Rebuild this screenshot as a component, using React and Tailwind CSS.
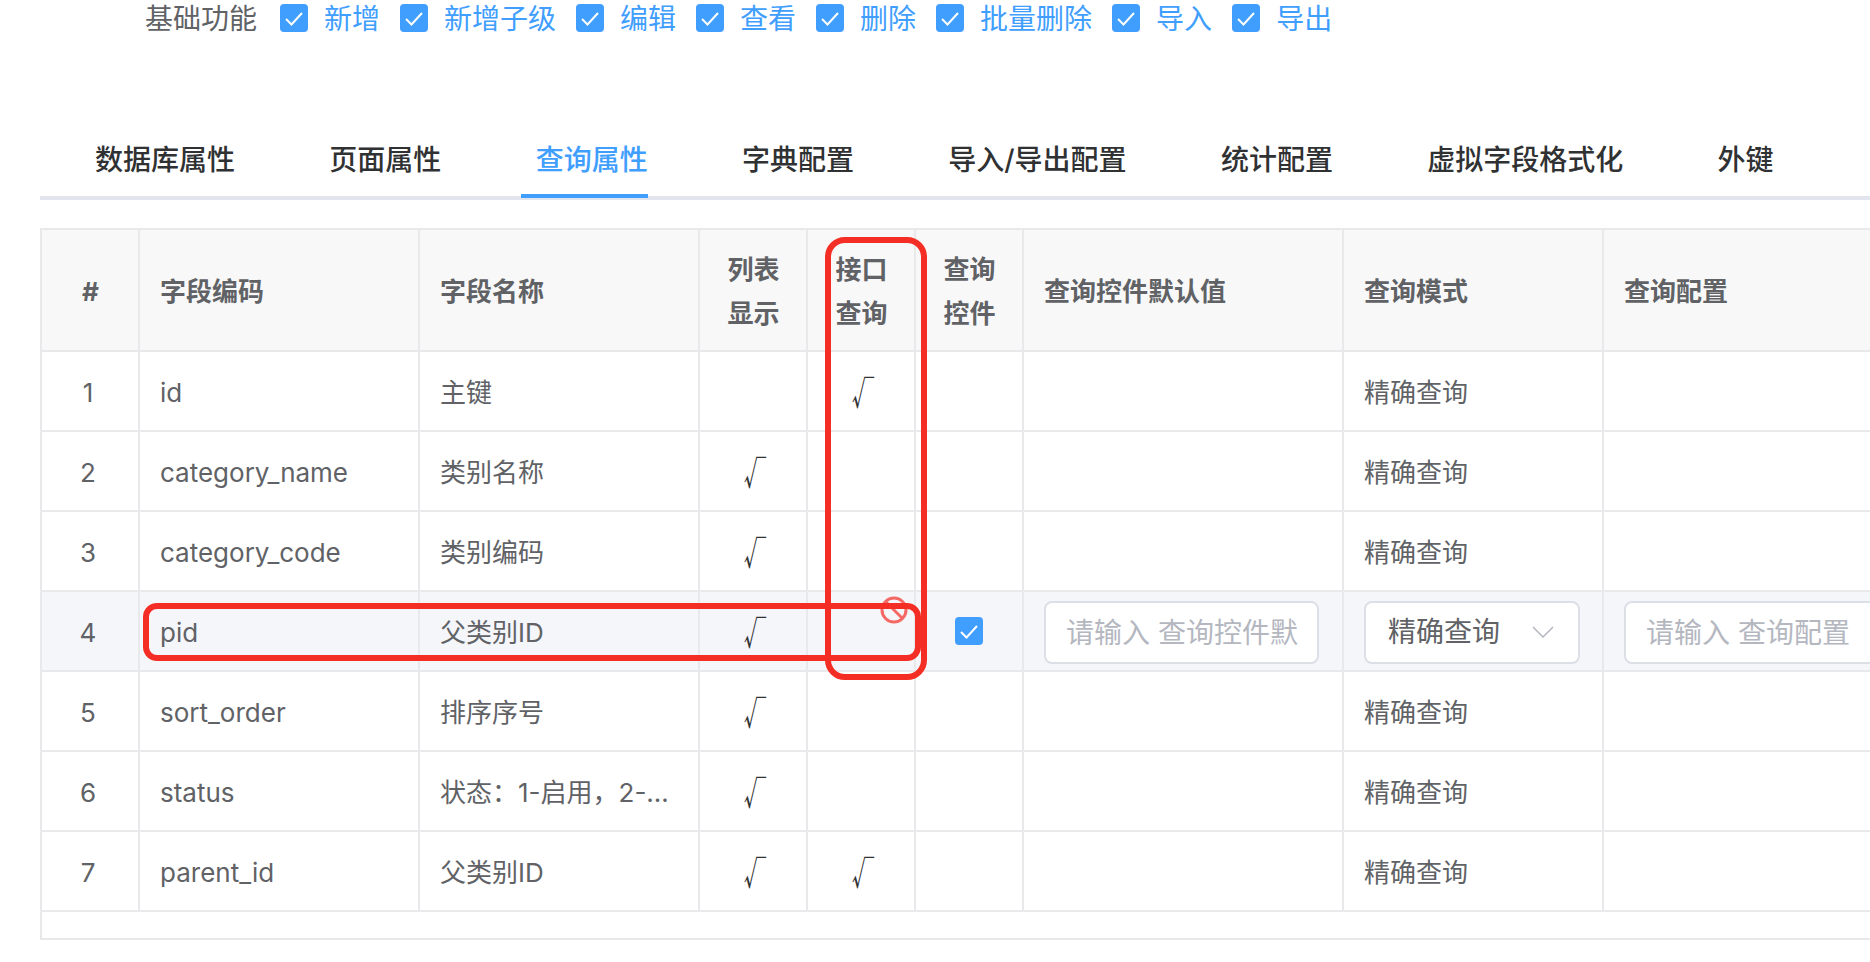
const features = ['新增', '新增子级', '编辑', '查看', '删除', '批量删除', '导入', '导出'];
const tabs = ['数据库属性', '页面属性', '查询属性', '字典配置', '导入/导出配置', '统计配置', '虚拟字段格式化', '外键'];

const rows = [
  { id: 1, code: 'id', name: '主键', list: false, api: true },
  { id: 2, code: 'category_name', name: '类别名称', list: true, api: false },
  { id: 3, code: 'category_code', name: '类别编码', list: true, api: false },
  { id: 4, code: 'pid', name: '父类别ID', list: true, api: false, editing: true },
  { id: 5, code: 'sort_order', name: '排序序号', list: true, api: false },
  { id: 6, code: 'status', name: '状态：1-启用，2-禁用', list: true, api: false },
  { id: 7, code: 'parent_id', name: '父类别ID', list: true, api: true },
];

const gridCols = 'grid grid-cols-[98px_280px_280px_108px_108px_108px_320px_260px_300px]';
const cell = 'flex items-center min-w-0 border-r-2 border-b-2 border-[#e9e9eb]';

function Checkbox() {
  return (
    <span className="h-7 w-7 shrink-0 rounded-[4px] bg-[#409eff]">
      <svg width="28" height="28" viewBox="0 0 28 28" fill="none" stroke="white" strokeWidth="2">
        <path d="M6 15 L11.5 20.5 L22 9" />
      </svg>
    </span>
  );
}

function Tick() {
  return <span className="ml-1 inline-block scale-x-[0.7] font-['Noto_Sans_CJK_SC',sans-serif] text-[32px] leading-none text-[#303133]">√</span>;
}

function HeaderCell({ children, center, className = '' }) {
  return (
    <div className={`${cell} bg-[#f8f8f8] pl-[20px] pr-[20px] pt-1 text-[26px] font-bold leading-[44px] text-[#606266] ${center ? 'justify-center pl-[21px] text-center' : ''} ${className}`}>
      <div>{children}</div>
    </div>
  );
}

function Input({ placeholder }) {
  return (
    <div className="flex h-[63px] w-full items-center rounded-lg border-2 border-[#dcdfe6] bg-white pl-5 pr-[18px] pt-0.5 text-[28px] text-[#b4b7bf]">
      <span className="overflow-hidden whitespace-nowrap">{placeholder}</span>
    </div>
  );
}

function Row({ row }) {
  const bg = row.editing ? 'bg-[#f5f6fa]' : 'bg-white';
  return (
    <div className={`${gridCols} h-20 text-[26px] text-[#606266]`}>
      <div className={`${cell} ${bg} justify-center pr-1 pt-0.5`}>{row.id}</div>
      <div className={`${cell} ${bg} px-[20px] pt-0.5`}>{row.code}</div>
      <div className={`${cell} ${bg} px-[20px] pt-0.5`}><span className="truncate">{row.name}</span></div>
      <div className={`${cell} ${bg} justify-center`}>{row.list && <Tick />}</div>
      <div className={`${cell} ${bg} justify-center`}>{row.api && <Tick />}</div>
      <div className={`${cell} ${bg} justify-center`}>{row.editing && <Checkbox />}</div>
      <div className={`${cell} ${bg} pl-[20px] pr-[23px] pt-0.5`}>{row.editing ? <Input placeholder="请输入 查询控件默认值" /> : null}</div>
      <div className={`${cell} ${bg} pl-[20px] pr-[22px] pt-0.5`}>
        {row.editing ? (
          <div className="flex h-[63px] w-full items-center justify-between rounded-lg border-2 border-[#dcdfe6] bg-white pl-[22px] pr-[24px] text-[28px]">
            <span className="whitespace-nowrap">精确查询</span>
            <svg width="22" height="12" viewBox="0 0 22 12" fill="none" stroke="#b4b7bf" strokeWidth="1.5">
              <path d="M1 1 L11 11 L21 1" />
            </svg>
          </div>
        ) : (
          '精确查询'
        )}
      </div>
      <div className={`${cell} ${bg} border-r-0 pl-[20px] pt-0.5`}>{row.editing && <Input placeholder="请输入 查询配置" />}</div>
    </div>
  );
}

export default function App() {
  return (
    <div className="relative h-[962px] w-full overflow-hidden bg-white pt-1 font-['Inter','Noto_Sans_CJK_SC',sans-serif]">
      {/* checkbox row */}
      <div className="flex h-7 items-center pl-[145px] text-[28px]">
        <span className="mr-[23px] pt-0.5 text-[#606266]">基础功能</span>
        {features.map((f) => (
          <label key={f} className="mr-[20px] flex items-center gap-[16px] text-[#409eff]">
            <Checkbox />
            <span className="pt-0.5">{f}</span>
          </label>
        ))}
      </div>

      {/* tabs */}
      <div className="ml-10 mt-[88px] flex h-[80px] items-center gap-[94.3px] border-b-4 border-[#e2e5ee] pl-[55px] pt-1 text-[28px] font-medium text-[#303133]">
        {tabs.map((t) => (
          <span key={t} className={t === '查询属性' ? 'relative text-[#409eff]' : ''}>
            {t}
            {t === '查询属性' && <span className="absolute -left-[15px] right-0 top-[55px] h-1 bg-[#409eff]" />}
          </span>
        ))}
      </div>

      {/* table */}
      <div className="ml-10 mt-[28px] h-[712px] border-b-2 border-l-2 border-t-2 border-[#e9e9eb]">
        <div className={`${gridCols} h-[122px]`}>
          <HeaderCell center>#</HeaderCell>
          <HeaderCell>字段编码</HeaderCell>
          <HeaderCell>字段名称</HeaderCell>
          <HeaderCell center>列表<br />显示</HeaderCell>
          <HeaderCell center>接口<br />查询</HeaderCell>
          <HeaderCell center>查询<br />控件</HeaderCell>
          <HeaderCell>查询控件默认值</HeaderCell>
          <HeaderCell>查询模式</HeaderCell>
          <HeaderCell className="border-r-0">查询配置</HeaderCell>
        </div>
        {rows.map((row) => (
          <Row key={row.id} row={row} />
        ))}
      </div>

      {/* red annotation boxes drawn over the table */}
      <div className="absolute left-[143px] top-[603px] h-[58px] w-[778px] rounded-[14px] border-[6px] border-[#f52e25]" />
      <div className="absolute left-[825px] top-[237px] h-[443px] w-[102px] rounded-[20px] border-[6px] border-[#f52e25]" />
      <svg className="absolute left-[880px] top-[596px] opacity-70" width="28" height="28" viewBox="0 0 28 28" fill="none" stroke="#f52e25" strokeWidth="3">
        <circle cx="14" cy="14" r="12" />
        <path d="M6 6 L22 22" />
      </svg>
    </div>
  );
}
